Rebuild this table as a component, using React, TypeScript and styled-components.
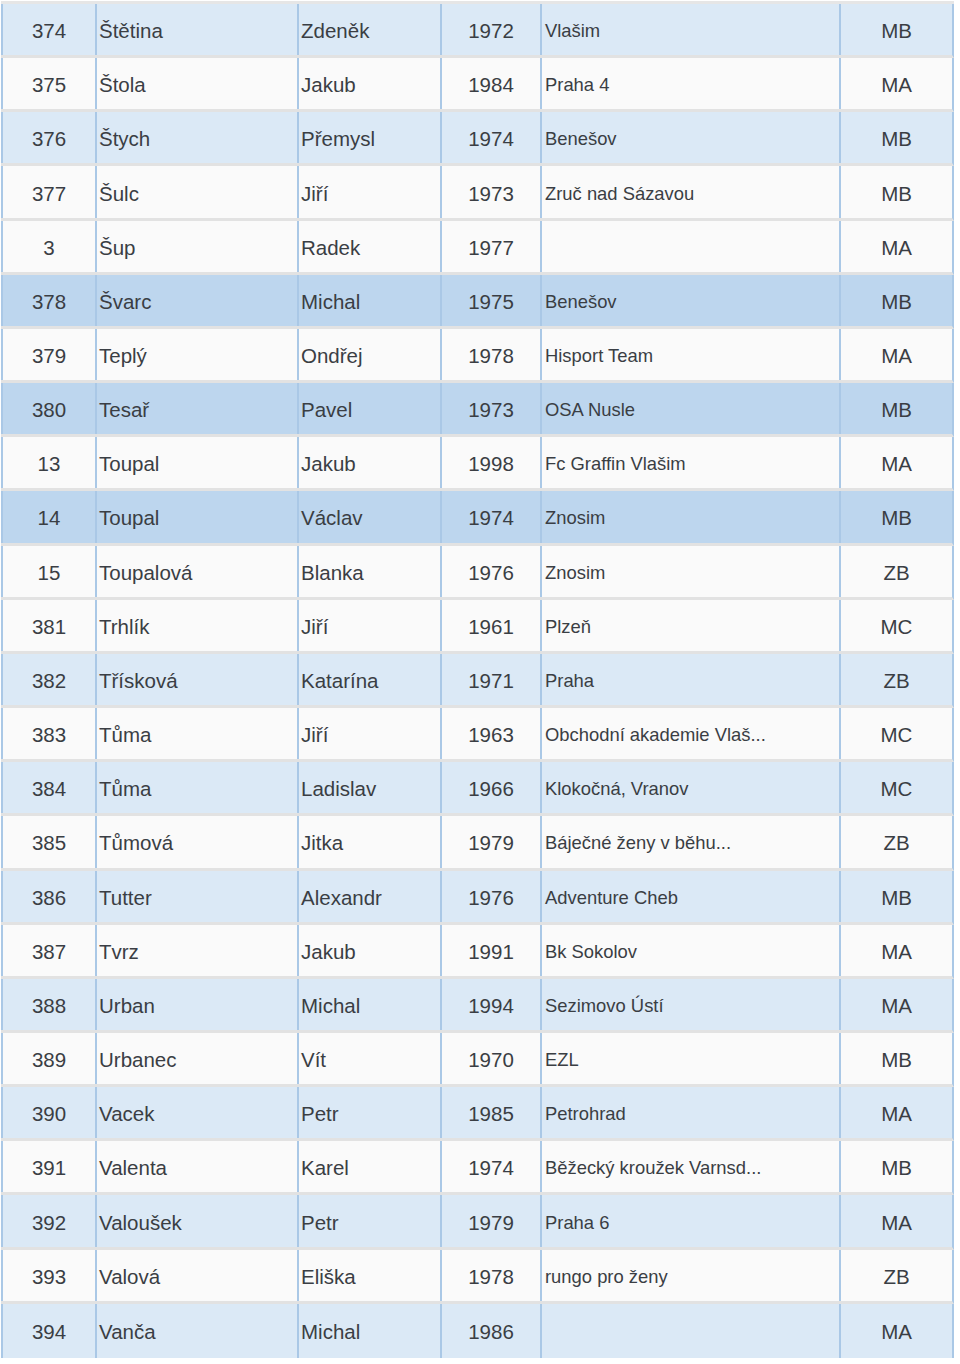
import styled, { createGlobalStyle } from "styled-components";

const GlobalStyle = createGlobalStyle`
	html, body {
		margin: 0;
		padding: 0;
		background: #ffffff;
	}
	body {
		font-family: "Liberation Sans", Arial, sans-serif;
		color: #3a3e44;
	}
`;

type Shade = "light" | "white" | "dark";

const shadeColors: Record<Shade, string> = {
	light: "#dbe9f6",
	white: "#fafafa",
	dark: "#bdd6ee",
};

const Table = styled.div`
	margin: 1px 0 0 1px;
	width: 953px;
	border-top: 3px solid #e6e6e6;
`;

const Row = styled.div<{ $shade: Shade }>`
	display: grid;
	grid-template-columns: 94px 202px 143px 100px 299px 113px;
	height: 54.17px;
	box-sizing: border-box;
	border-bottom: 3px solid #e2e2e2;
	border-right: 2px solid #aac8e6;
	background: ${({ $shade }) => shadeColors[$shade]};

	&:last-child {
		border-bottom: none;
	}
`;

const Cell = styled.div<{ $align?: "left" | "center"; $small?: boolean }>`
	display: flex;
	align-items: center;
	justify-content: ${({ $align }) => ($align === "center" ? "center" : "flex-start")};
	box-sizing: border-box;
	border-left: 2px solid #aac8e6;
	padding-top: 3px;
	padding-left: ${({ $align, $small }) => ($align === "center" ? "0" : $small ? "3px" : "2px")};
	font-size: ${({ $small }) => ($small ? "18.4px" : "20.5px")};
	white-space: nowrap;
	overflow: hidden;
`;

interface Runner {
	id: string;
	last: string;
	first: string;
	year: string;
	club: string;
	cat: string;
	shade: Shade;
}

const runners: Runner[] = [
	{ id: "374", last: "Štětina", first: "Zdeněk", year: "1972", club: "Vlašim", cat: "MB", shade: "light" },
	{ id: "375", last: "Štola", first: "Jakub", year: "1984", club: "Praha 4", cat: "MA", shade: "white" },
	{ id: "376", last: "Štych", first: "Přemysl", year: "1974", club: "Benešov", cat: "MB", shade: "light" },
	{ id: "377", last: "Šulc", first: "Jiří", year: "1973", club: "Zruč nad Sázavou", cat: "MB", shade: "white" },
	{ id: "3", last: "Šup", first: "Radek", year: "1977", club: "", cat: "MA", shade: "white" },
	{ id: "378", last: "Švarc", first: "Michal", year: "1975", club: "Benešov", cat: "MB", shade: "dark" },
	{ id: "379", last: "Teplý", first: "Ondřej", year: "1978", club: "Hisport Team", cat: "MA", shade: "white" },
	{ id: "380", last: "Tesař", first: "Pavel", year: "1973", club: "OSA Nusle", cat: "MB", shade: "dark" },
	{ id: "13", last: "Toupal", first: "Jakub", year: "1998", club: "Fc Graffin Vlašim", cat: "MA", shade: "white" },
	{ id: "14", last: "Toupal", first: "Václav", year: "1974", club: "Znosim", cat: "MB", shade: "dark" },
	{ id: "15", last: "Toupalová", first: "Blanka", year: "1976", club: "Znosim", cat: "ZB", shade: "white" },
	{ id: "381", last: "Trhlík", first: "Jiří", year: "1961", club: "Plzeň", cat: "MC", shade: "white" },
	{ id: "382", last: "Třísková", first: "Katarína", year: "1971", club: "Praha", cat: "ZB", shade: "light" },
	{ id: "383", last: "Tůma", first: "Jiří", year: "1963", club: "Obchodní akademie Vlaš...", cat: "MC", shade: "white" },
	{ id: "384", last: "Tůma", first: "Ladislav", year: "1966", club: "Klokočná, Vranov", cat: "MC", shade: "light" },
	{ id: "385", last: "Tůmová", first: "Jitka", year: "1979", club: "Báječné ženy v běhu...", cat: "ZB", shade: "white" },
	{ id: "386", last: "Tutter", first: "Alexandr", year: "1976", club: "Adventure Cheb", cat: "MB", shade: "light" },
	{ id: "387", last: "Tvrz", first: "Jakub", year: "1991", club: "Bk Sokolov", cat: "MA", shade: "white" },
	{ id: "388", last: "Urban", first: "Michal", year: "1994", club: "Sezimovo Ústí", cat: "MA", shade: "light" },
	{ id: "389", last: "Urbanec", first: "Vít", year: "1970", club: "EZL", cat: "MB", shade: "white" },
	{ id: "390", last: "Vacek", first: "Petr", year: "1985", club: "Petrohrad", cat: "MA", shade: "light" },
	{ id: "391", last: "Valenta", first: "Karel", year: "1974", club: "Běžecký kroužek Varnsd...", cat: "MB", shade: "white" },
	{ id: "392", last: "Valoušek", first: "Petr", year: "1979", club: "Praha 6", cat: "MA", shade: "light" },
	{ id: "393", last: "Valová", first: "Eliška", year: "1978", club: "rungo pro ženy", cat: "ZB", shade: "white" },
	{ id: "394", last: "Vanča", first: "Michal", year: "1986", club: "", cat: "MA", shade: "light" },
];

function App() {
	return (
		<>
			<GlobalStyle />
			<Table>
				{runners.map((r, i) => (
					<Row key={`${r.id}-${i}`} $shade={r.shade}>
						<Cell $align="center">{r.id}</Cell>
						<Cell>{r.last}</Cell>
						<Cell>{r.first}</Cell>
						<Cell $align="center">{r.year}</Cell>
						<Cell $small>{r.club}</Cell>
						<Cell $align="center">{r.cat}</Cell>
					</Row>
				))}
			</Table>
		</>
	);
}

export default App;
